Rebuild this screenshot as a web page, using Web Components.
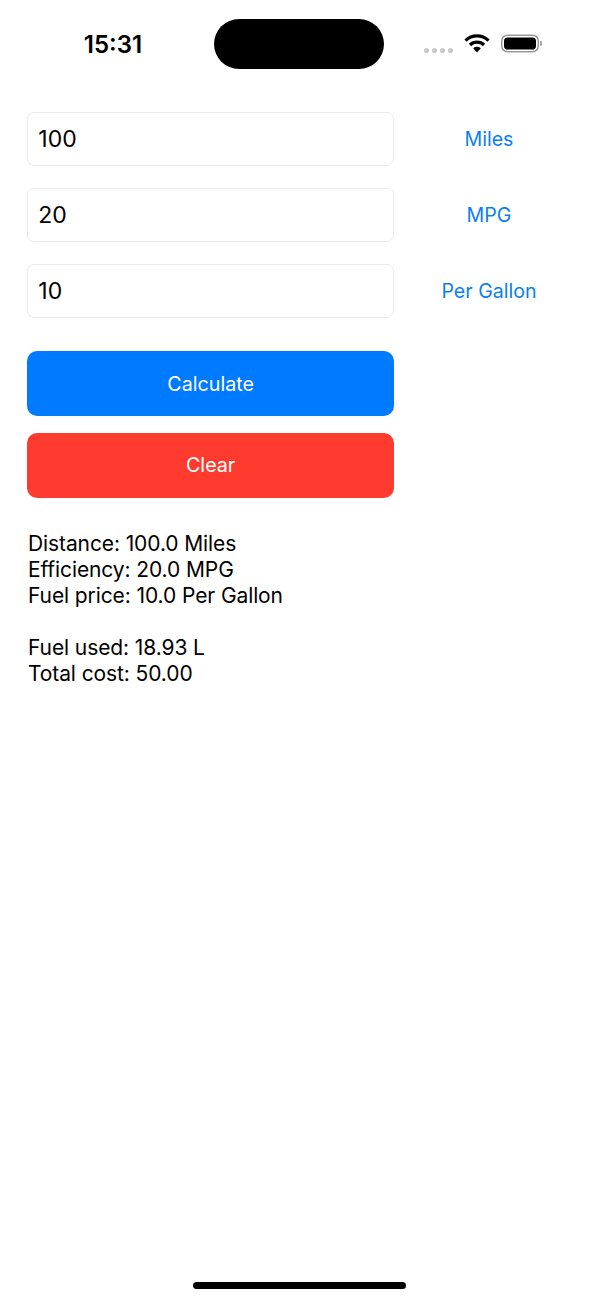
<!DOCTYPE html>
<html>
<head>
<meta charset="utf-8">
<title>Fuel calculator</title>
<style>
  html, body { margin: 0; background: #fff; }
  body { font-family: Inter, "Liberation Sans", sans-serif; color: #000; }
</style>
</head>
<body>
<fuel-app></fuel-app>
<script>
class StatusBar extends HTMLElement {
  constructor() {
    super();
    this._root = this.attachShadow({ mode: 'open' });
    this._root.innerHTML = `
      <style>
        :host { display: flex; height: 88px; align-items: flex-start; padding-top: 19px; box-sizing: border-box; }
        .time { width: 214px; height: 50px; padding-left: 12px; box-sizing: border-box; display: flex; align-items: center; justify-content: center; font-size: 24px; font-weight: 600; }
        .island { width: 170px; height: 50px; border-radius: 25px; background: #000; }
        .icons { display: flex; align-items: flex-start; margin-left: 40px; padding-top: 15px; }
        .dots { display: flex; gap: 3px; margin-top: 14px; margin-right: 11px; }
        .dots i { width: 5px; height: 5px; border-radius: 50%; background: #c9c9c9; }
        svg { display: block; }
        .wifi { margin-right: 11px; }
      </style>
      <div class="time">15:31</div>
      <div class="island"></div>
      <div class="icons">
        <div class="dots"><i></i><i></i><i></i><i></i></div>
        <svg class="wifi" width="26" height="19" viewBox="0 0 26 19">
          <path d="M1.5 6.6 A16.5 16.5 0 0 1 24.5 6.6" fill="none" stroke="#000" stroke-width="3.3"/>
          <path d="M6 11 A10 10 0 0 1 20 11" fill="none" stroke="#000" stroke-width="3.3"/>
          <path d="M9.2 14.3 A5.6 5.6 0 0 1 16.8 14.3 L13 18.6 Z" fill="#000"/>
        </svg>
        <svg width="41" height="19" viewBox="0 0 41 19">
          <rect x="0.75" y="1.25" width="36.5" height="16.5" rx="5.5" fill="#fff" stroke="#999" stroke-width="1.5"/>
          <rect x="3" y="3.5" width="32" height="12" rx="3.6" fill="#000"/>
          <path d="M39 7 a2.4 2.4 0 0 1 0 5 Z" fill="#a5a5a5"/>
        </svg>
      </div>
    `;
  }
}

class UnitRow extends HTMLElement {
  constructor() {
    super();
    this._root = this.attachShadow({ mode: 'open' });
    this._root.innerHTML = `
      <style>
        :host { display: flex; align-items: center; }
        input { width: 366.7px; height: 54.5px; box-sizing: border-box; padding: 1px 10px 0; border: 1px solid #ececec; border-radius: 7px; background: #fff; font: 400 23px Inter, "Liberation Sans", sans-serif; color: #000; outline: none; }
        .unit { width: 190px; text-align: center; color: #0a7ff0; font-size: 19.6px; padding-top: 0.5px; }
      </style>
      <input type="text">
      <div class="unit"><slot></slot></div>
    `;
  }
  connectedCallback() {
    this._root.querySelector('input').setAttribute('value', this.getAttribute('value'));
  }
}

class ActionButton extends HTMLElement {
  constructor() {
    super();
    this._root = this.attachShadow({ mode: 'open' });
    this._root.innerHTML = `
      <style>
        :host { display: flex; width: 366.7px; height: 65px; border-radius: 10px; align-items: center; justify-content: center; color: #fff; font-size: 19.7px; background: var(--btn-color); }
      </style>
      <slot></slot>
    `;
  }
}

class ResultBlock extends HTMLElement {
  constructor() {
    super();
    this._root = this.attachShadow({ mode: 'open' });
    this._root.innerHTML = `
      <style>
        :host { display: block; font-size: 21px; letter-spacing: -0.1px; line-height: 26px; padding-left: 0.7px; }
        slot { white-space: pre-line; }
      </style>
      <slot></slot>
    `;
  }
}

class FuelApp extends HTMLElement {
  constructor() {
    super();
    this._root = this.attachShadow({ mode: 'open' });
    this._root.innerHTML = `
      <style>
        :host { display: flex; flex-direction: column; height: 1300px; box-sizing: border-box; }
        main { display: flex; flex-direction: column; padding: 23.5px 0 0 27.3px; }
        .rows { display: flex; flex-direction: column; gap: 21.5px; }
        .buttons { display: flex; flex-direction: column; gap: 16.5px; margin-top: 33px; }
        result-block { margin-top: 33.5px; }
        .home { width: 213px; height: 7px; border-radius: 4px; background: #000; margin: auto 0 11px 193px; }
      </style>
      <status-bar></status-bar>
      <main>
        <div class="rows">
          <unit-row value="100">Miles</unit-row>
          <unit-row value="20">MPG</unit-row>
          <unit-row value="10">Per Gallon</unit-row>
        </div>
        <div class="buttons">
          <action-button style="--btn-color:#007aff">Calculate</action-button>
          <action-button style="--btn-color:#ff3b30">Clear</action-button>
        </div>
        <result-block>Distance: 100.0 Miles
Efficiency: 20.0 MPG
Fuel price: 10.0 Per Gallon

Fuel used: 18.93 L
Total cost: 50.00</result-block>
      </main>
      <div class="home"></div>
    `;
  }
}

customElements.define('status-bar', StatusBar);
customElements.define('unit-row', UnitRow);
customElements.define('action-button', ActionButton);
customElements.define('result-block', ResultBlock);
customElements.define('fuel-app', FuelApp);
</script>
</body>
</html>
